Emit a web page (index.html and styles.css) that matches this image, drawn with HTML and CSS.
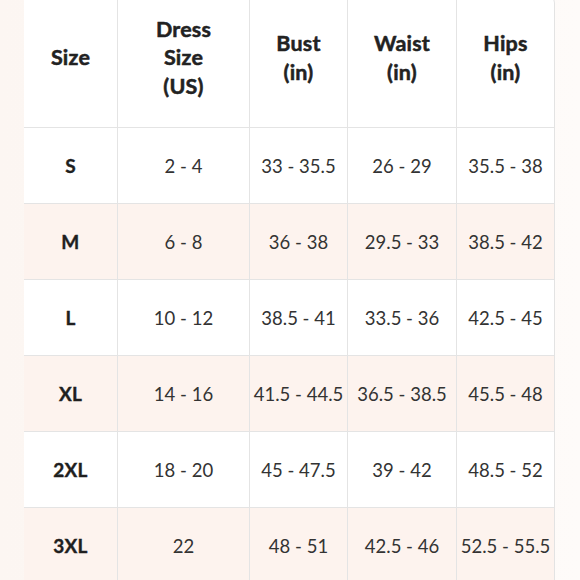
FILE: index.html
```html
<!DOCTYPE html>
<html>
<head>
<meta charset="utf-8">
<link rel="stylesheet" href="styles.css">
</head>
<body>
<div class="chart">
  <div class="row head">
    <div class="cell">Size</div>
    <div class="cell">Dress<br>Size<br>(US)</div>
    <div class="cell">Bust<br>(in)</div>
    <div class="cell">Waist<br>(in)</div>
    <div class="cell">Hips<br>(in)</div>
  </div>
  <div class="row">
    <div class="cell size">S</div><div class="cell">2 - 4</div><div class="cell">33 - 35.5</div><div class="cell">26 - 29</div><div class="cell">35.5 - 38</div>
  </div>
  <div class="row alt">
    <div class="cell size">M</div><div class="cell">6 - 8</div><div class="cell">36 - 38</div><div class="cell">29.5 - 33</div><div class="cell">38.5 - 42</div>
  </div>
  <div class="row">
    <div class="cell size">L</div><div class="cell">10 - 12</div><div class="cell">38.5 - 41</div><div class="cell">33.5 - 36</div><div class="cell">42.5 - 45</div>
  </div>
  <div class="row alt">
    <div class="cell size">XL</div><div class="cell">14 - 16</div><div class="cell">41.5 - 44.5</div><div class="cell">36.5 - 38.5</div><div class="cell">45.5 - 48</div>
  </div>
  <div class="row">
    <div class="cell size">2XL</div><div class="cell">18 - 20</div><div class="cell">45 - 47.5</div><div class="cell">39 - 42</div><div class="cell">48.5 - 52</div>
  </div>
  <div class="row alt last">
    <div class="cell size">3XL</div><div class="cell">22</div><div class="cell">48 - 51</div><div class="cell">42.5 - 46</div><div class="cell">52.5 - 55.5</div>
  </div>
</div>
</body>
</html>
```
FILE: styles.css
```css
html, body {
  margin: 0;
  padding: 0;
  height: 580px;
  overflow: hidden;
}
body {
  background: linear-gradient(90deg, #fcf6f2 0%, #fdf8f5 50%, #fefbf9 100%);
  font-family: Lato, "Open Sans", sans-serif;
  color: #232323;
}
.chart {
  margin-top: -8px;
  margin-left: 24px;
  width: 531px;
  background: #ffffff;
  border-right: 1.5px solid #e3e3e3;
  border-top-right-radius: 12px;
  overflow: hidden;
  box-sizing: border-box;
}
.row {
  display: grid;
  grid-template-columns: 94px 132px 98px 109px 1fr;
  height: 76px;
  border-bottom: 1.5px solid #e4e4e4;
  box-sizing: border-box;
}
.row.head {
  height: 136px;
}
.row.alt {
  background: #fdf3ee;
}
.cell {
  display: flex;
  align-items: center;
  justify-content: center;
  text-align: center;
  border-right: 1.5px solid #e4e4e4;
  font-size: 18.5px;
  font-weight: 400;
  color: #333;
  letter-spacing: 0;
  white-space: nowrap;
}
.cell:last-child {
  border-right: none;
}
.head .cell {
  font-weight: 700;
  font-size: 21.5px;
  line-height: 28.5px;
  color: #222;
  letter-spacing: 0.2px;
  -webkit-text-stroke: 0.5px #222;
  padding-bottom: 4px;
}
.cell.size {
  font-weight: 700;
  font-size: 19px;
  color: #1f1f1f;
  letter-spacing: 0.3px;
  -webkit-text-stroke: 0.4px #1f1f1f;
}
```
